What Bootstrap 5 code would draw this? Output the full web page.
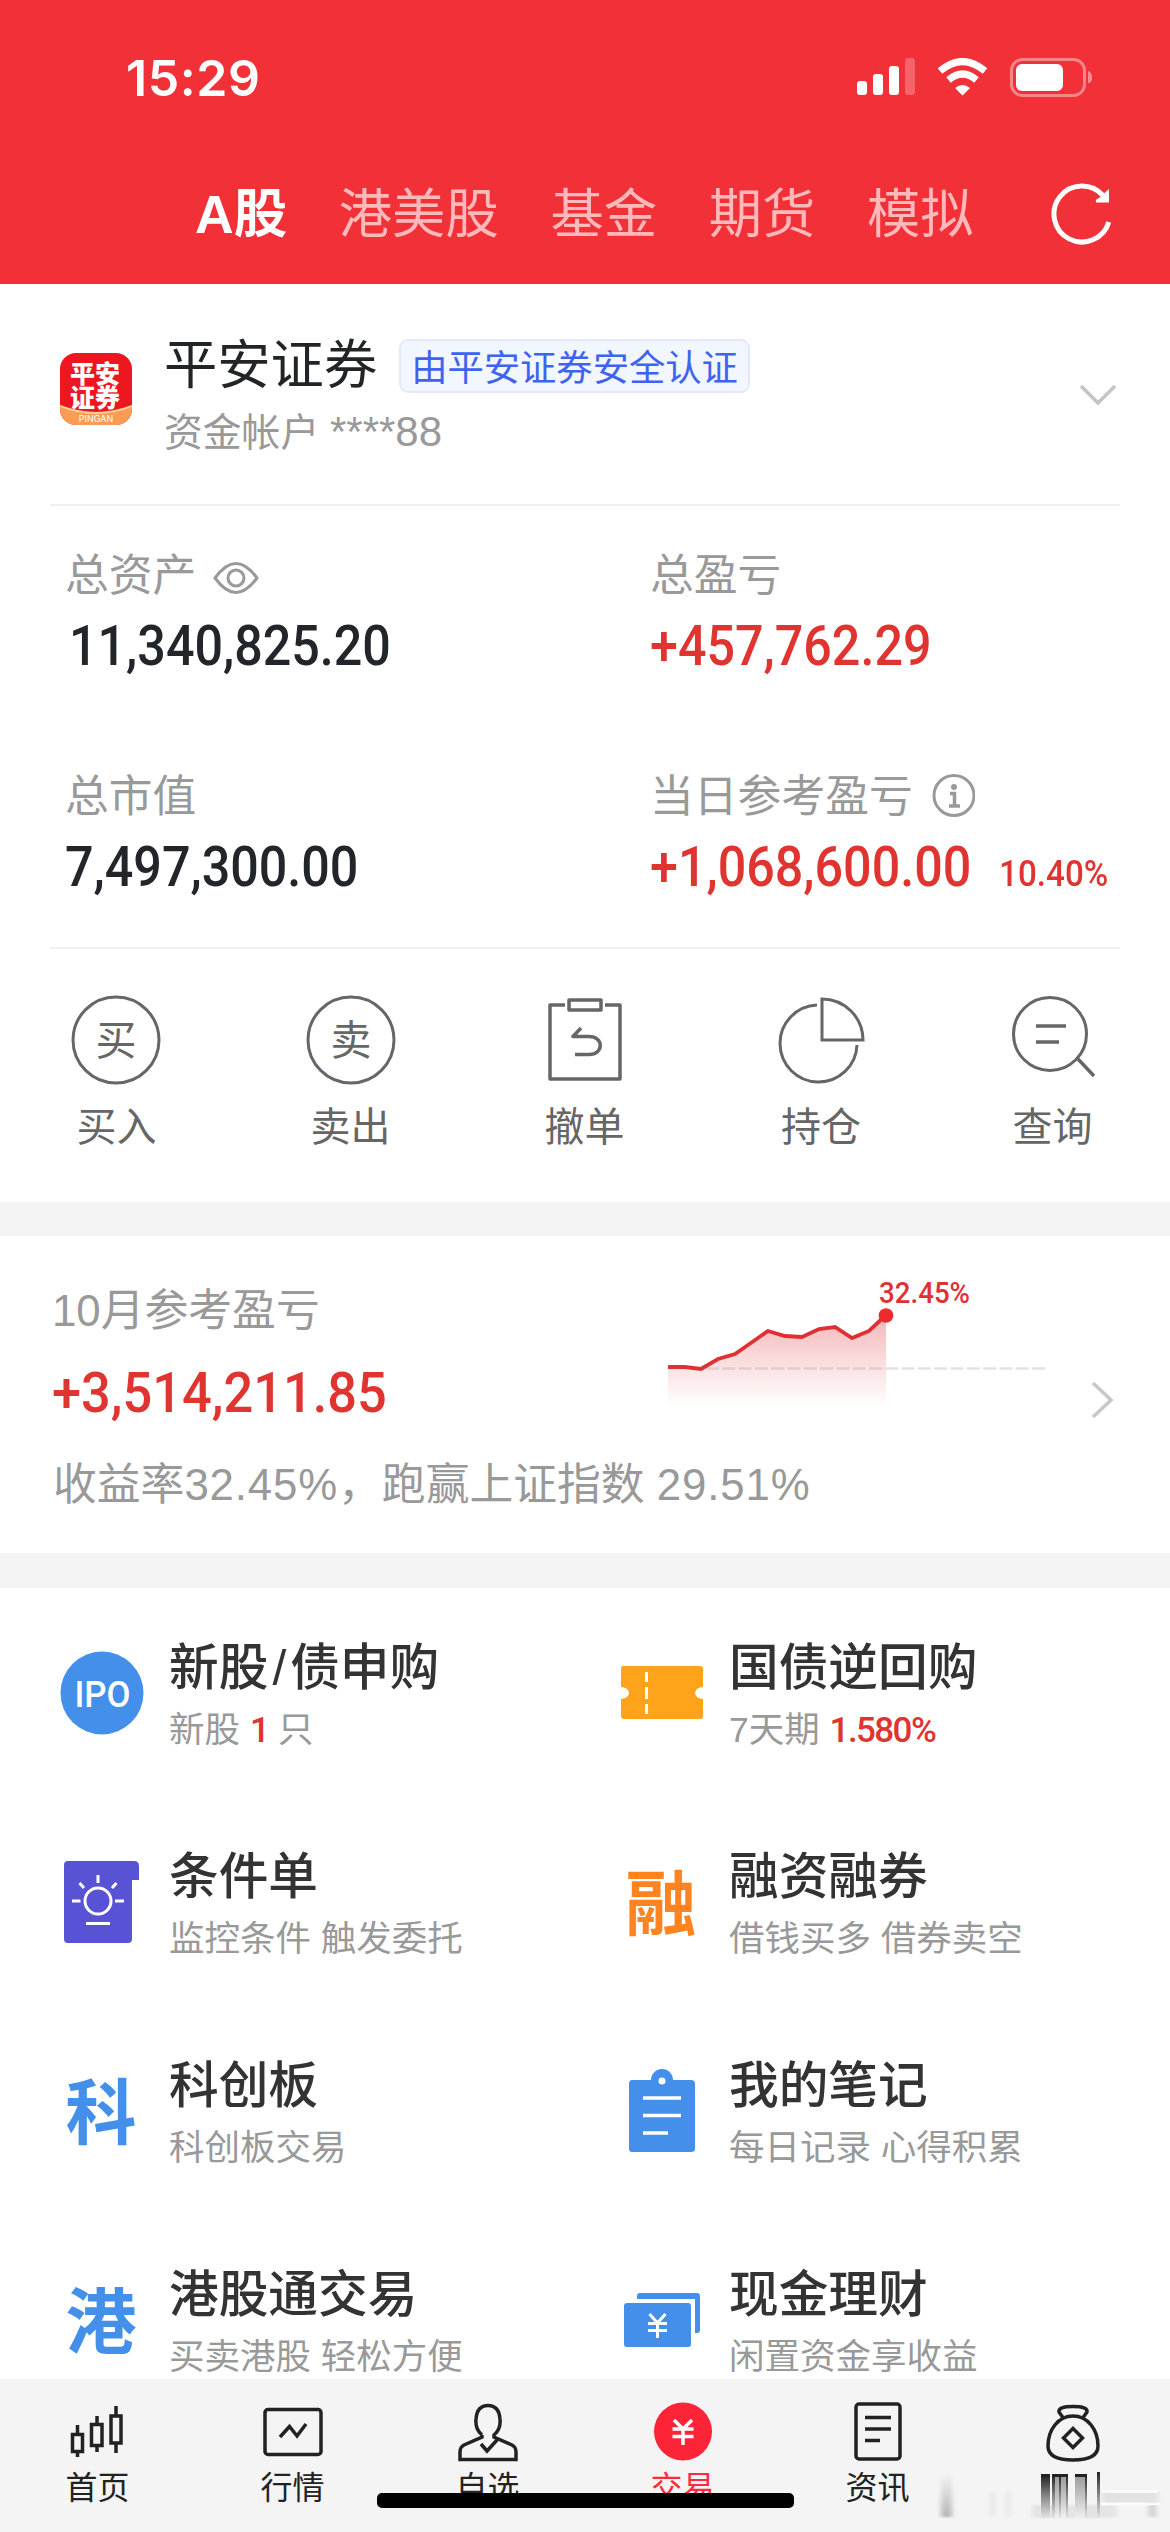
<!DOCTYPE html>
<html lang="zh-CN">
<head>
<meta charset="utf-8">
<meta name="viewport" content="width=device-width, initial-scale=1">
<title>交易</title>
<link href="https://cdn.jsdelivr.net/npm/bootstrap@5.3.0/dist/css/bootstrap.min.css" rel="stylesheet">
<style>
body{font-family:"Liberation Sans","Noto Sans CJK SC",sans-serif;background:#fff;color:#22252a;margin:0}
.screen{width:1170px;height:2532px;overflow:hidden}
svg{display:block;flex:none}
.topbar{height:284px;background:#f23038;color:#fff}
.statusbar{height:156px;padding:0 77px 0 126px}
.clock{font:600 50px/60px Inter,sans-serif;letter-spacing:.6px}
.markets{height:116px;padding:2px 54px 0 195px;gap:51.7px;font-size:53.3px;line-height:60px;color:#ffb9bb}
.markets .now{color:#fff;font-weight:700;font-size:53.5px}
.brandlogo{width:72px;height:72px;border-radius:16px;overflow:hidden;flex:none;margin-top:20px}
.account{height:222px;margin:0 50px;padding:49px 3px 0 10px;border-bottom:2px solid #efefef}
.bname{font-size:53.3px;line-height:62px;padding-top:2px;color:#222528}
.cert{height:54px;margin-top:2px;border:2px solid #e3e9fa;border-radius:9px;background:#f2f6ff;color:#3d63ef;font-size:36.3px;line-height:56px;padding:0 10px;margin-left:-2px}
.sub{font-size:38.8px;line-height:46px;color:#999}
.sub .tn{font-size:42px}
.assets{height:443px;margin:0 50px;border-bottom:2px solid #f1f1f1}
.assets .cell{padding-left:15px;height:221px;padding-top:45px}
.assets .cell-l{width:585px}
.assets .cell-r{width:485px}
.lbl{font-size:43.8px;line-height:50px;color:#999}
.num{font-family:Roboto,sans-serif;font-weight:500;font-size:56px;line-height:64px;transform-origin:0 50%;transform:scaleX(.897);white-space:nowrap;margin-top:13px}
.pct{font-size:37px;margin-left:31px}
.red{color:#df3430}
.actions{height:253px;padding:41px 0 0}
.actions .act{width:234px;font-size:40px;line-height:48px;color:#666}
.actions .cap{margin-top:13px;margin-left:-1px}
.strip{height:35px;background:#f4f4f4}
.strip-a{height:34px}
.month{height:317px;padding:0 49px 0 53px}
.month>div{width:560px}
.mlabel{margin-top:50px;margin-left:-1px}
.mnum{margin-top:25px;margin-left:-1px;transform:scaleX(.935)}
.msum{margin-top:35px}
.msum .tn{letter-spacing:.85px}
.mchart{margin-top:24px}
.grid8{padding-top:50px;height:791px;overflow:hidden}
.item{height:209px;padding-left:56px}
.item-l{width:560px}
.item-r{width:610px}
.ico{width:92px;height:110px;margin-right:21px;flex:none}
.brandchar{font:700 71px/80px "Noto Sans CJK SC",sans-serif;margin-top:-9px;margin-left:-2px}
.c-org{color:#ff8420}
.c-blu{color:#438fea}
.ttl{font-size:49.7px;line-height:60px;font-weight:500;color:#333}
.desc{font-size:35.5px;line-height:44px;color:#999;margin-top:10px}
.desc b{font-family:Roboto,sans-serif;font-weight:500;font-size:35px;letter-spacing:-1.6px;color:#df3430}
.tabs{height:153px;background:#f4f4f4;position:relative;font-size:32px;line-height:40px;color:#222}
.tabs .tb{width:195px;padding-top:20px}
.tabs .tb svg{margin-bottom:3px}
.tabs .on{color:#fe2b3c}
.homebar{position:absolute;left:377px;top:114px;width:417px;height:15px;border-radius:5px;background:#000}
.smear{position:absolute;left:930px;top:80px}
</style>
<script src="https://cdn.jsdelivr.net/npm/bootstrap@5.3.0/dist/js/bootstrap.bundle.min.js"></script>
</head>
<body>
<div class="screen d-flex flex-column">
<header class="topbar">
  <div class="statusbar d-flex align-items-center justify-content-between">
    <div class="clock">15:29</div>
    <svg width="238" height="40" viewBox="0 0 238 40" fill="#fff">
      <rect x="2" y="23" width="10" height="14" rx="3"/><rect x="18" y="16" width="10" height="21" rx="3"/><rect x="34" y="8" width="10" height="29" rx="3"/><rect x="50" y="0" width="10" height="37" rx="3" opacity=".25"/>
      <g fill="none" stroke="#fff" stroke-width="7"><path d="M85 13Q107.500 -6 130 13"/><path d="M93.500 22Q107.500 10 121.500 22"/></g>
      <path d="M100 30Q107.500 24 115 30L107.500 37.500z"/>
      <rect x="156.500" y="1.500" width="73" height="36" rx="11" fill="none" stroke="#fff" stroke-width="3" opacity=".42"/><rect x="161" y="6" width="47" height="27" rx="6"/><path d="M233 13Q237 14 237 19.500T233 25z" opacity=".45"/>
    </svg>
  </div>
  <nav class="markets d-flex align-items-center">
    <span class="now">A股</span><span>港美股</span><span>基金</span><span>期货</span><span>模拟</span>
    <svg class="ms-auto" width="66" height="66" viewBox="0 0 66 66"><path d="M58.800 40A28 28 0 1 1 53 13.500" fill="none" stroke="#fff" stroke-width="5"/><path d="M59 7V20.500H46Q45 17 49 16L52 14Q56 9 59 7z" fill="#fff"/></svg>
  </nav>
</header>
<main>
<section class="account d-flex">
  <div class="brandlogo">
    <svg width="72" height="72" viewBox="0 0 72 72"><rect width="72" height="72" fill="#ee1620"/><path d="M0 53Q36 67 72 53V72H0z" fill="#fb9c54"/><path d="M0 53Q36 67 72 53" fill="none" stroke="#ffd19a" stroke-width="2"/><text fill="#fff" font-family="Noto Sans CJK SC" font-weight="900" font-size="25"><tspan x="10" y="30">平安</tspan><tspan x="10" y="54">证券</tspan></text><text x="36" y="69" font-family="Inter" font-size="9" fill="#fff" text-anchor="middle">PINGAN</text></svg>
  </div>
  <div class="flex-grow-1 ms-4 ps-2">
    <div class="d-flex align-items-center gap-4"><span class="bname">平安证券</span><span class="cert">由平安证券安全认证</span></div>
    <div class="sub mt-2 pt-1">资金帐户 <span class="tn">****88</span></div>
  </div>
  <svg class="mt-5" width="40" height="26" viewBox="-1 -1 40 26"><path d="M3 4L20 21L37 4" fill="none" stroke="#c4c4c4" stroke-width="3.500"/></svg>
</section>
<section class="assets d-flex flex-wrap">
  <div class="cell cell-l"><div class="lbl d-flex align-items-center">总资产
    <svg class="ms-3 mt-1" width="48" height="40" viewBox="0 0 48 40" fill="none" stroke="#999" stroke-width="3"><path d="M3 20Q24 -9 45 20Q24 49 3 20z"/><circle cx="24" cy="20" r="8"/></svg></div>
    <div class="num ms-1">11,340,825.20</div></div>
  <div class="cell cell-r"><div class="lbl">总盈亏</div><div class="num red">+457,762.29</div></div>
  <div class="cell cell-l"><div class="lbl">总市值</div><div class="num">7,497,300.00</div></div>
  <div class="cell cell-r"><div class="lbl d-flex align-items-center">当日参考盈亏
    <svg class="ms-3" width="46" height="46" viewBox="0 0 46 46" fill="none" stroke="#999" stroke-width="3"><circle cx="25" cy="21.500" r="20"/><circle cx="25" cy="13" r="3" fill="#999" stroke="none"/><path d="M21 19.500H25.500V31.500M20 32H31" stroke-width="3.500"/></svg></div>
    <div class="num red">+1,068,600.00<span class="pct">10.40%</span></div></div>
</section>
<section class="actions d-flex text-center">
  <div class="act"><svg class="mx-auto" width="110" height="100" viewBox="-55 -50 110 100"><circle cx="-1" r="43" fill="none" stroke="#666" stroke-width="3"/><text x="-1" y="15" font-size="41" text-anchor="middle" fill="#666">买</text></svg><div class="cap">买入</div></div>
  <div class="act"><svg class="mx-auto" width="110" height="100" viewBox="-55 -50 110 100"><circle r="43" fill="none" stroke="#666" stroke-width="3"/><text y="15" font-size="41" text-anchor="middle" fill="#666">卖</text></svg><div class="cap">卖出</div></div>
  <div class="act"><svg class="mx-auto" width="110" height="100" viewBox="-55 -50 110 100" fill="none" stroke="#666" stroke-width="3.500"><path d="M-20 -35H-35V39H35V-35H20M-16 -40H16V-30H-16zM-4 -12L-12 -3.500H4C19 -3.500 19 14.500 4 14.500H-10" stroke-linejoin="round"/></svg><div class="cap">撤单</div></div>
  <div class="act"><svg class="mx-auto" width="110" height="100" viewBox="-57 -50 110 100" fill="none" stroke="#666" stroke-width="3"><path d="M-4 -35A38.500 38.500 0 1 0 36 5M1 -41V0H42A41 41 0 0 0 1 -41z"/></svg><div class="cap ms-1">持仓</div></div>
  <div class="act"><svg class="mx-auto" width="110" height="100" viewBox="-56 -50 110 100" fill="none" stroke="#666" stroke-width="3"><circle cx="-4" cy="-6" r="36.500"/><path d="M24 19L40 36M-18 -14H12M-18 2H5" stroke-width="3.500"/></svg><div class="cap">查询</div></div>
</section>
<div class="strip strip-a"></div>
<section class="month d-flex justify-content-between">
  <div>
    <div class="lbl mlabel">10月参考盈亏</div>
    <div class="num red mnum">+3,514,211.85</div>
    <div class="lbl msum text-nowrap">收益率<span class="tn">32.45%</span>，跑赢上证指数 <span class="tn">29.51%</span></div>
  </div>
  <svg class="mchart" width="480" height="180" viewBox="0 0 480 180">
    <defs><linearGradient id="area" x1="0" y1="0" x2="0" y2="1"><stop stop-color="#f4b5b7"/><stop offset=".5" stop-color="#fadcdd"/><stop offset="1" stop-color="#fff"/></linearGradient></defs>
    <path d="M27 107L44 107L60 109L77 99L94 94L110.500 82.500L127 71L144 76L161 77L178 69L194 67L211 78L228 71L245 55V147H27z" fill="url(#area)"/>
    <path d="M65 108.500H404" stroke="#999" stroke-opacity=".28" stroke-width="2.500" stroke-dasharray="13 3.300"/>
    <path d="M27 107L44 107L60 109L77 99L94 94L110.500 82.500L127 71L144 76L161 77L178 69L194 67L211 78L228 71L245 55" fill="none" stroke="#df3034" stroke-width="3.800"/>
    <circle cx="245" cy="55.500" r="7.300" fill="#ec2b31"/>
    <text x="238" y="43" font-family="Roboto" font-weight="500" font-size="29.500" textLength="91" lengthAdjust="spacingAndGlyphs" fill="#df3034">32.45%</text>
    <path d="M452 123L470 140L452 157" fill="none" stroke="#c8c8c8" stroke-width="3.500"/>
  </svg>
</section>
<div class="strip"></div>
<section class="grid8 d-flex flex-wrap align-content-start">
  <div class="item item-l d-flex"><div class="ico d-flex align-items-center justify-content-center"><svg width="84" height="84" viewBox="0 0 84 84"><circle cx="42" cy="42" r="41.500" fill="#438fea"/><text x="42.500" y="56" font-family="Roboto" font-weight="500" font-size="37" textLength="56" lengthAdjust="spacingAndGlyphs" fill="#fff" text-anchor="middle">IPO</text></svg></div><div><div class="ttl">新股<span class="px-1">/</span>债申购</div><div class="desc">新股 <b>1</b> 只</div></div></div>
  <div class="item item-r d-flex"><div class="ico d-flex align-items-center justify-content-center"><svg width="84" height="56" viewBox="0 0 84 56"><path d="M3 1H80Q83 1 83 4V22A8 6 0 0 0 83 34V51Q83 54 80 54H4Q1 54 1 51V34A8 6 0 0 0 1 22V4Q1 1 3 1z" fill="#ffa31a"/><path d="M26.500 7V17M26.500 22V34M26.500 39V49" stroke="#fff" stroke-width="3"/></svg></div><div><div class="ttl">国债逆回购</div><div class="desc">7天期 <b>1.580%</b></div></div></div>

  <div class="item item-l d-flex"><div class="ico d-flex align-items-center justify-content-center"><svg width="76" height="84" viewBox="0 0 76 84"><path d="M4 1H70Q75 1 75 6V20H68V79Q68 83 64 83H4Q0 83 0 79V5Q0 1 4 1z" fill="#5753d4"/><g fill="none" stroke="#fff" stroke-width="3"><circle cx="34" cy="41" r="13"/><path d="M34 15V23M15.500 23L20 28M52.500 23L48 28M8 41H16.500M51 41H60M22 63.500H46"/></g></svg></div><div><div class="ttl">条件单</div><div class="desc">监控条件 触发委托</div></div></div>
  <div class="item item-r d-flex"><div class="ico d-flex align-items-center justify-content-center"><span class="brandchar c-org">融</span></div><div><div class="ttl">融资融券</div><div class="desc">借钱买多 借券卖空</div></div></div>

  <div class="item item-l d-flex"><div class="ico d-flex align-items-center justify-content-center"><span class="brandchar c-blu">科</span></div><div><div class="ttl">科创板</div><div class="desc">科创板交易</div></div></div>
  <div class="item item-r d-flex"><div class="ico d-flex align-items-center justify-content-center"><svg width="68" height="84" viewBox="0 0 68 84"><path d="M4 11H23A11 11 0 0 1 45 11H63Q67 11 67 15V80Q67 83 63 83H4Q1 83 1 80V15Q1 11 4 11z" fill="#438fea"/><circle cx="34" cy="12" r="3.500" fill="#fff"/><path d="M15 29H53M15 46.500H53M15 64H40" stroke="#fff" stroke-width="3.500"/></svg></div><div><div class="ttl">我的笔记</div><div class="desc">每日记录 心得积累</div></div></div>

  <div class="item item-l d-flex"><div class="ico d-flex align-items-center justify-content-center"><span class="brandchar c-blu">港</span></div><div><div class="ttl">港股通交易</div><div class="desc">买卖港股 轻松方便</div></div></div>
  <div class="item item-r d-flex"><div class="ico d-flex align-items-center justify-content-center"><svg width="77" height="56" viewBox="0 0 77 56"><path d="M13 7V4Q13 1 16 1H73Q76 1 76 4V38Q76 41 73 41H71V7z" fill="#438fea"/><rect x="0" y="11" width="67" height="44" rx="3" fill="#438fea"/><path d="M25.500 22L33.500 31L41.500 22M33.500 31V46M24 31.500H43M24 38.500H43" fill="none" stroke="#fff" stroke-width="3"/></svg></div><div><div class="ttl">现金理财</div><div class="desc">闲置资金享收益</div></div></div>
</section>
</main>
<footer class="tabs d-flex text-center">
  <div class="tb"><svg class="mx-auto" width="64" height="66" viewBox="0 0 64 66" fill="none" stroke="#222" stroke-width="3.500"><path d="M6.500 35.500H16.500V52.500H6.500zM11.500 26V35M11.500 53V58M25.500 25.500H36V46.500H25.500zM31 17V25M31 47V53M45 17H55V44H45zM50 7V17M50 44V54"/></svg>首页</div>
  <div class="tb"><svg class="mx-auto" width="64" height="66" viewBox="0 0 64 66" fill="none" stroke="#222" stroke-width="3.500"><rect x="4" y="10.500" width="56" height="45" rx="3"/><path d="M19 38L28.500 27.500L36 37L45 25"/></svg>行情</div>
  <div class="tb"><svg class="mx-auto" width="64" height="66" viewBox="0 0 64 66" fill="none" stroke="#222" stroke-width="3.500"><path d="M26 36Q19 30 20 20Q21 6.500 32 6.500T44 20Q45 30 38 36V38L56 46Q60 48 60 53V60.500H4V53Q4 48 8 46L26 38V36M25 45L31 52L41 41"/></svg>自选</div>
  <div class="tb on"><svg class="mx-auto" width="64" height="66" viewBox="0 0 64 66"><circle cx="32" cy="32.500" r="29" fill="#fe2437"/><path d="M23 21L32 30L41 21M32 30V46M21.500 30H42.500M21.500 37.500H42.500" fill="none" stroke="#fff" stroke-width="3.500"/></svg>交易</div>
  <div class="tb"><svg class="mx-auto" width="64" height="66" viewBox="0 0 64 66" fill="none" stroke="#222" stroke-width="3.500"><rect x="10" y="5" width="44" height="55" rx="3"/><path d="M19 18.500H45M19 30H45M19 41.500H34"/></svg>资讯</div>
  <div class="tb"><svg class="mx-auto" width="64" height="66" viewBox="0 0 64 66" fill="none" stroke="#222" stroke-width="3.500"><path d="M23 20L18 13Q17 7.500 32 7.500T46 13L41 20M32 17C17 17 7 31 7 47Q7 61 32 61T57 47C57 31 47 17 32 17zM32 29.500L41.500 39L32 48.500L22.500 39z"/></svg></div>
  <svg class="smear" width="240" height="63" viewBox="0 0 240 63">
    <defs><linearGradient id="fd" x1="0" y1="0" x2="0" y2="1"><stop stop-color="#222"/><stop offset=".5" stop-color="#888"/><stop offset="1" stop-color="#e4e4e4"/></linearGradient>
    <linearGradient id="fl" x1="0" y1="0" x2="0" y2="1"><stop stop-color="#999"/><stop offset="1" stop-color="#f0f0f0"/></linearGradient>
    <linearGradient id="up" x1="0" y1="0" x2="0" y2="1"><stop stop-color="#999" stop-opacity="0"/><stop offset="1" stop-color="#999" stop-opacity=".7"/></linearGradient>
    <filter id="soft"><feGaussianBlur stdDeviation="2.500 1"/></filter></defs>
    <g filter="url(#soft)"><rect x="11" y="14" width="11" height="44" fill="url(#up)"/><rect x="60" y="33" width="5" height="25" fill="#e6e6e6"/><rect x="76" y="33" width="5" height="25" fill="#e8e8e8"/><rect x="102" y="46" width="80" height="13" fill="#e4e4e4"/><rect x="172" y="32" width="56" height="12" fill="#e2e2e2"/><rect x="180" y="44" width="7" height="14" fill="#e4e4e4"/><rect x="218" y="44" width="9" height="14" fill="#d6d6d6"/></g>
    <g fill="url(#fl)"><rect x="122" y="16" width="16" height="43"/><rect x="145" y="16" width="12" height="43"/></g>
    <g fill="url(#fd)"><rect x="111" y="16" width="9" height="43"/><rect x="122" y="16" width="3" height="43"/><rect x="129" y="16" width="2" height="43"/><rect x="136" y="16" width="2" height="43"/><rect x="155" y="16" width="2" height="43"/><rect x="167" y="13" width="3" height="46"/></g>
    <path d="M111 16.500H120M122 16.500H138M145 16.500H157" stroke="#222" stroke-width="3"/>
    <path d="M172 32.500H228M172 45H230" stroke="#fff" stroke-width="2.500" opacity=".9"/>
  </svg>
  <div class="homebar"></div>
</footer>
</div>
</body>
</html>
